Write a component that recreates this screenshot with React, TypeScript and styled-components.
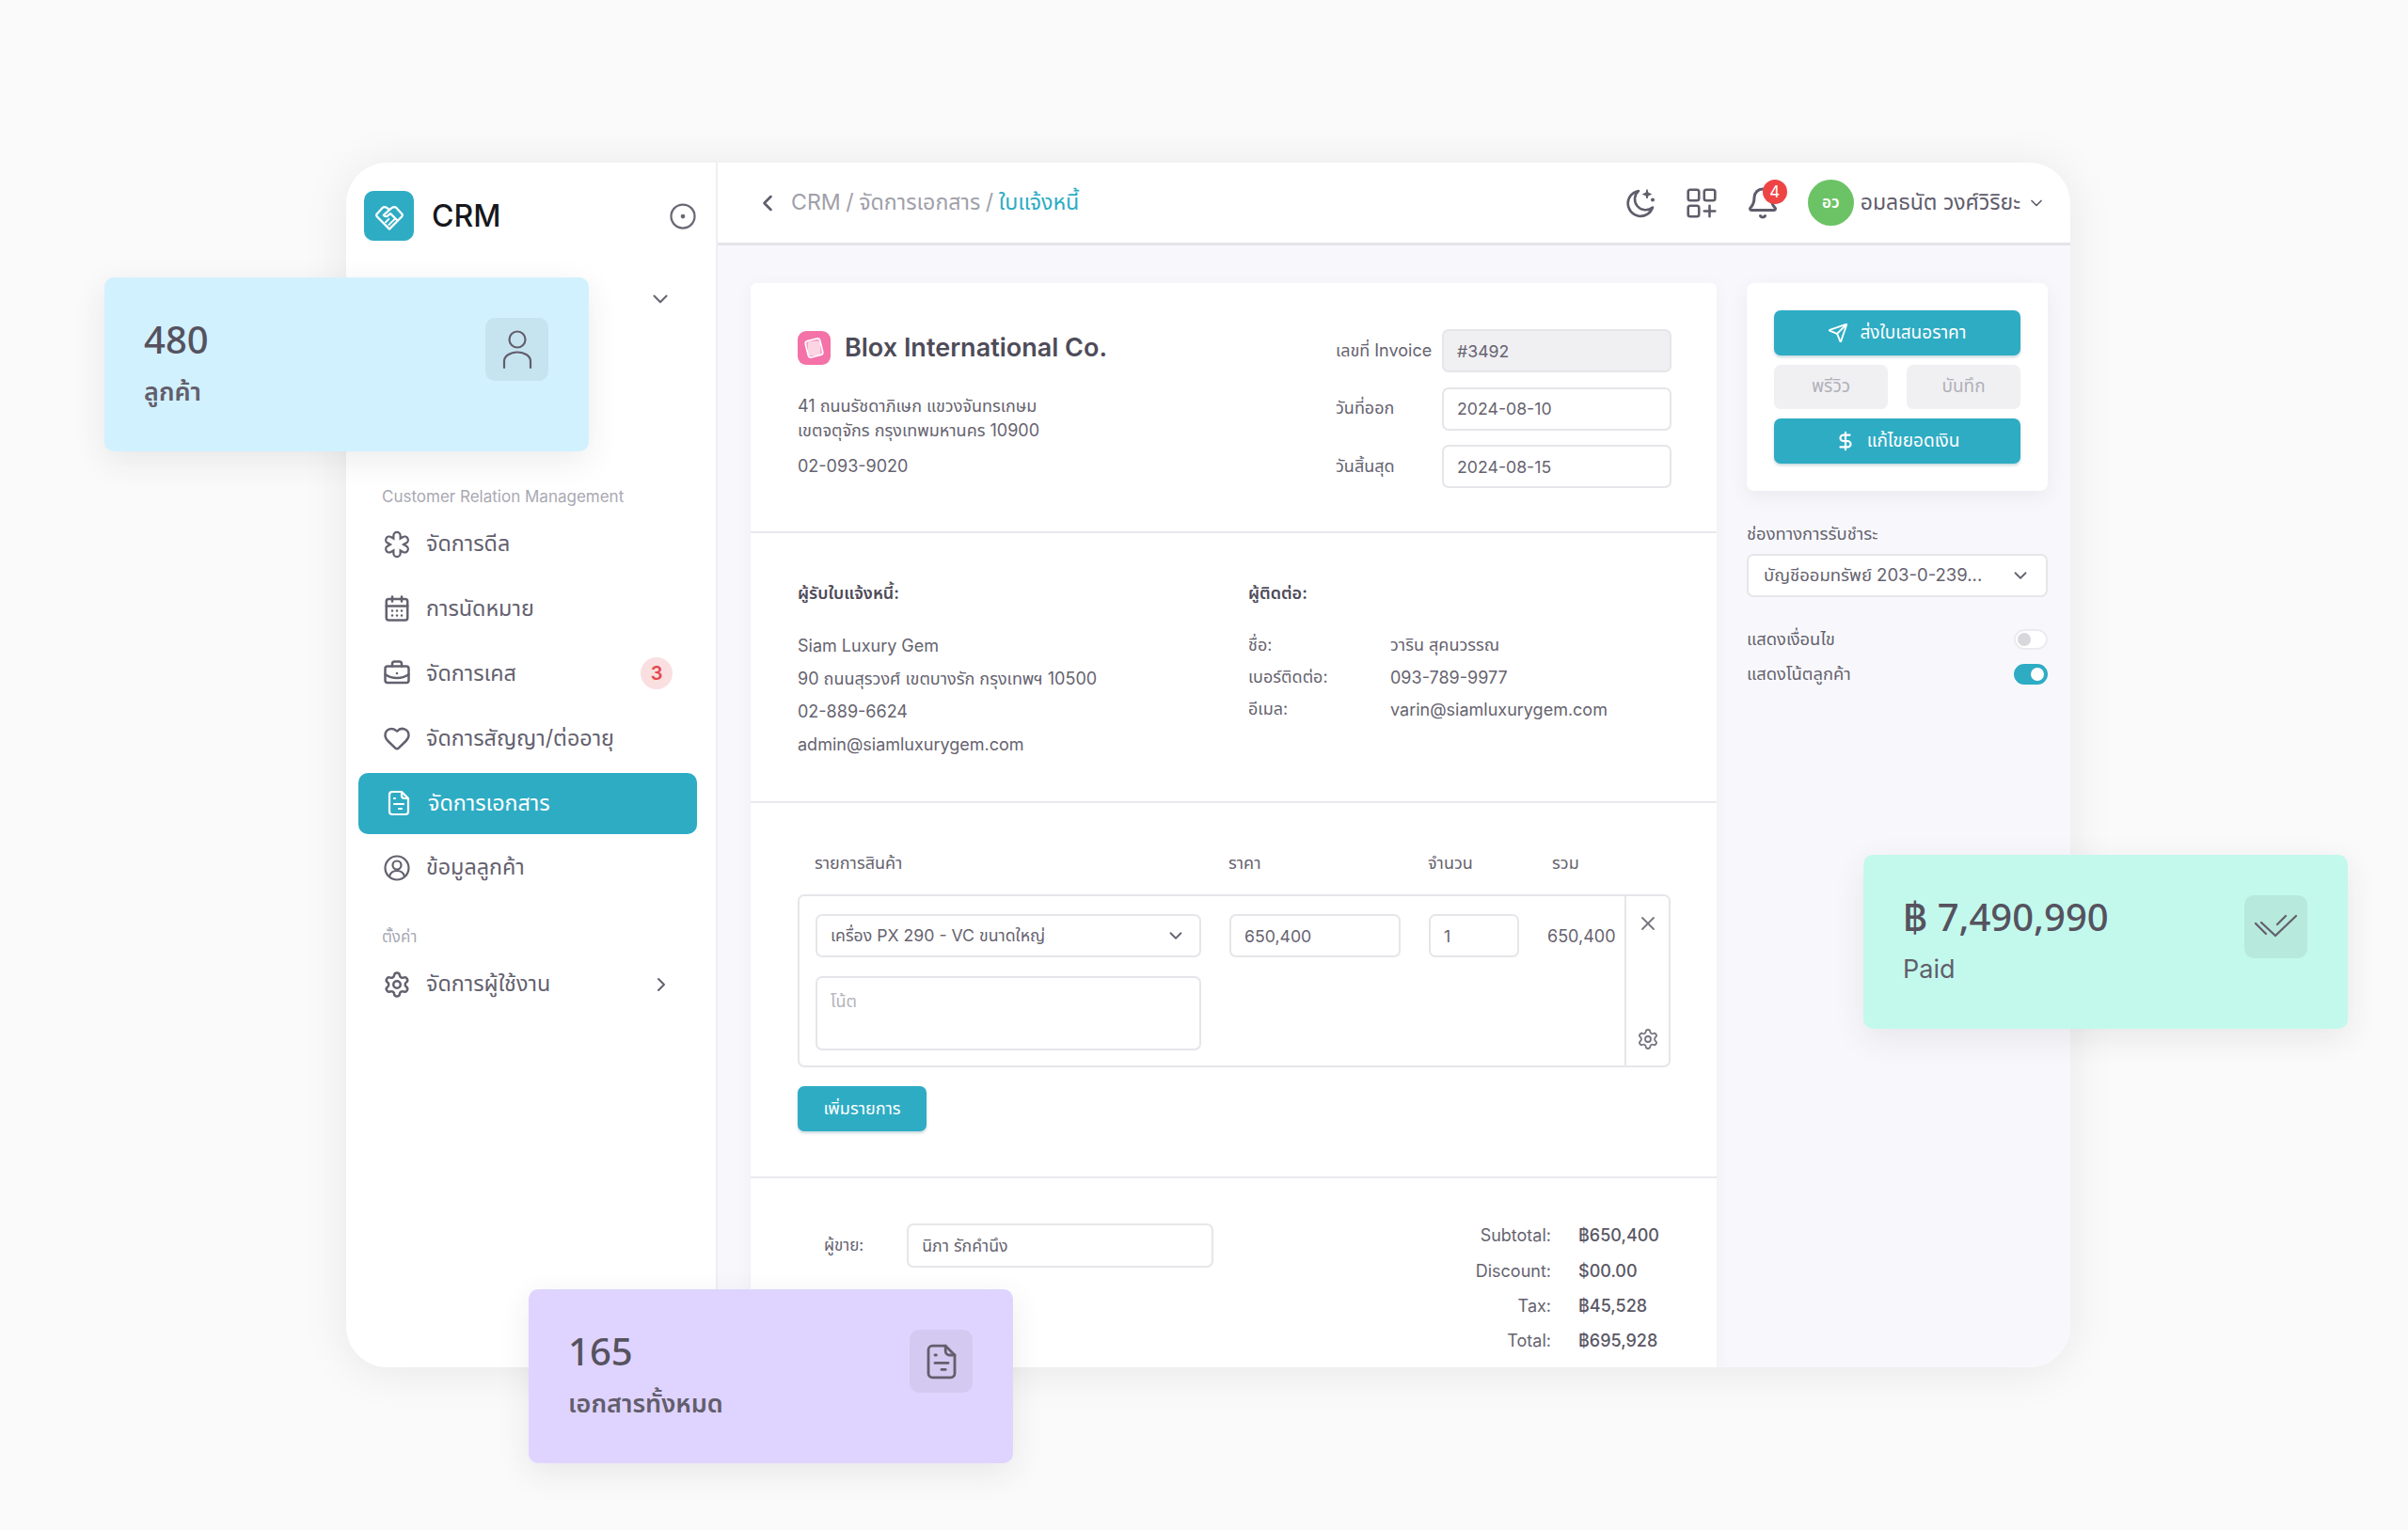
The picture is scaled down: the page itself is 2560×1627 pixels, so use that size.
import React from "react";
import styled, { createGlobalStyle } from "styled-components";
import {
  Bell,
  BriefcaseBusiness,
  CalendarDays,
  ChevronDown,
  ChevronLeft,
  ChevronRight,
  CircleDot,
  DollarSign,
  Heart,
  Send,
  Settings,
  X,
} from "lucide-react";

const GlobalStyle = createGlobalStyle`
  html, body { margin: 0; padding: 0; background: #fafafa; }
  * { box-sizing: border-box; }
  body { font-family: Inter, "Noto Sans", "Noto Sans Thai", "DejaVu Sans", sans-serif; color: #5f5c6b; }
`;

const teal = "#2eacc4";

const Stage = styled.div`
  position: relative;
  width: 2560px;
  height: 1627px;
  padding: 173px 0 0 368px;
  overflow: hidden;
`;

const Window = styled.div`
  display: grid;
  grid-template-columns: 395px 1fr;
  width: 1833px;
  height: 1281px;
  background: #fff;
  border-radius: 44px;
  overflow: hidden;
  box-shadow: 0 4px 50px rgba(0, 0, 0, 0.08);
`;

const Sidebar = styled.aside`
  padding: 30px 20px 0 13px;
  background: #fff;
  border-right: 2px solid #efeff3;
`;

const Brand = styled.div`
  display: flex;
  align-items: center;
  height: 53px;
  padding: 0 0 0 6px;
  color: #6b6875;
`;

const LogoBox = styled.div`
  display: flex;
  align-items: center;
  justify-content: center;
  width: 53px;
  height: 53px;
  border-radius: 10px;
  background: ${teal};
  margin-right: 19px;
`;

const BrandName = styled.div`
  flex: 1;
  font-size: 32px;
  font-weight: 500;
  color: #17171c;
`;

const Switcher = styled.div`
  display: flex;
  justify-content: flex-end;
  align-items: center;
  height: 44px;
  margin-top: 40px;
  padding-right: 26px;
  color: #6b6875;
`;

const GroupLabel = styled.div<{ $top: number }>`
  height: 20px;
  line-height: 20px;
  margin-top: ${(p) => p.$top}px;
  padding-left: 25px;
  font-size: 17px;
  color: #a9a9b3;
`;

const NavList = styled.nav`
  display: flex;
  flex-direction: column;
  gap: 3.9px;
  margin-top: 8px;
`;

const NavItem = styled.div<{ $active?: boolean }>`
  display: flex;
  align-items: center;
  gap: 16px;
  height: 65px;
  padding: 0 ${(p) => (p.$active ? 28 : 26)}px;
  border-radius: 10px;
  font-size: 23.3px;
  background: ${(p) => (p.$active ? teal : "transparent")};
  color: ${(p) => (p.$active ? "#fff" : "#64616f")};
`;

const NavText = styled.span`
  flex: 1;
`;

const CountBadge = styled.span`
  display: flex;
  align-items: center;
  justify-content: center;
  width: 34px;
  height: 34px;
  border-radius: 50%;
  background: #fadfe0;
  color: #e5484d;
  font-size: 20px;
  font-weight: 600;
`;

const Content = styled.div`
  display: flex;
  flex-direction: column;
  min-width: 0;
  background: #f8f8fc;
`;

const Topbar = styled.header`
  display: flex;
  align-items: center;
  flex: none;
  height: 88px;
  padding: 0 26px 0 39px;
  background: #fff;
  border-bottom: 3px solid #e4e4e9;
  color: #5f5c6b;
`;

const Crumbs = styled.div`
  flex: 1;
  margin-left: 11px;
  font-size: 23.2px;
  word-spacing: -1px;
  color: #a0a0aa;
`;

const CrumbActive = styled.span`
  color: ${teal};
`;

const TopIcons = styled.div`
  display: flex;
  align-items: center;
  gap: 29px;
`;

const BellWrap = styled.div`
  position: relative;
  height: 36px;
  margin-right: 1px;
`;

const BellBadge = styled.span`
  position: absolute;
  top: -7px;
  right: -8px;
  display: flex;
  align-items: center;
  justify-content: center;
  width: 26px;
  height: 26px;
  border-radius: 50%;
  background: #ee4444;
  color: #fff;
  font-size: 17px;
`;

const UserBox = styled.div`
  display: flex;
  align-items: center;
  gap: 7px;
  font-size: 23px;
`;

const Avatar = styled.div`
  display: flex;
  align-items: center;
  justify-content: center;
  width: 49px;
  height: 49px;
  border-radius: 50%;
  background: #6cc365;
  color: #fff;
  font-size: 17px;
  font-weight: 600;
`;

const Main = styled.main`
  flex: 1;
  display: grid;
  grid-template-columns: 1027px 320px;
  gap: 32px;
  padding: 40px 0 0 35px;
  overflow: hidden;
`;

const InvoiceCard = styled.section`
  height: 1200px;
  background: #fff;
  box-shadow: 0 2px 16px rgba(40, 40, 70, 0.05);
  border-radius: 6px 6px 0 0;
`;

const Section = styled.div`
  border-bottom: 2px solid #e9e9ee;
`;

const HeadSection = styled(Section)`
  display: flex;
  justify-content: space-between;
  height: 266px;
  padding: 49px 48px 0 50px;
`;

const Company = styled.div`
  font-size: 18px;
  color: #66636f;
`;

const CompanyTitle = styled.div`
  display: flex;
  align-items: center;
  gap: 15px;
  height: 37px;
  margin: 1px 0 31px;
  font-size: 27px;
  font-weight: 600;
  color: #4e4b59;
`;

const AddressLine = styled.div<{ $gap?: number }>`
  line-height: 26px;
  margin-top: ${(p) => p.$gap ?? 0}px;
`;

const DateForm = styled.div`
  display: grid;
  grid-template-columns: 113px 244px;
  grid-auto-rows: 46px;
  row-gap: 15.5px;
  align-items: center;
  font-size: 18px;
  color: #66636f;
`;

const Field = styled.div<{ $disabled?: boolean; $w?: number }>`
  display: flex;
  align-items: center;
  justify-content: space-between;
  width: ${(p) => (p.$w ? `${p.$w}px` : "100%")};
  height: 46px;
  padding: 0 14px;
  border: 2px solid #e6e6ea;
  border-radius: 7px;
  background: ${(p) => (p.$disabled ? "#f0f0f3" : "#fff")};
  font-size: 17.7px;
  color: #66636f;
`;

const PartySection = styled(Section)`
  display: grid;
  grid-template-columns: 479px 1fr;
  height: 287px;
  padding: 52px 0 0 50px;
  font-size: 18px;
  color: #66636f;
`;

const PartyTitle = styled.div`
  height: 24px;
  line-height: 24px;
  margin-bottom: 26px;
  font-weight: 600;
  color: #4e4b59;
`;

const PartyLine = styled.div`
  line-height: 35px;
`;

const ContactGrid = styled.div`
  display: grid;
  grid-template-columns: 151px 1fr;
  grid-auto-rows: 34px;
  align-items: center;
`;

const ItemsSection = styled(Section)`
  height: 399px;
  padding: 52px 49px 0 50px;
`;

const ItemHead = styled.div`
  display: grid;
  grid-template-columns: 410px 182px 96px 1fr;
  column-gap: 30px;
  height: 24px;
  line-height: 24px;
  padding-left: 18px;
  margin-bottom: 21px;
  font-size: 18px;
  color: #66636f;
`;

const HeadTotal = styled.span`
  padding-left: 6px;
`;

const ItemBox = styled.div`
  display: grid;
  grid-template-columns: 1fr 47px;
  height: 184px;
  border: 2px solid #e6e6ea;
  border-radius: 7px;
`;

const ItemBody = styled.div`
  padding: 19px 0 0 17px;
`;

const ItemRow = styled.div`
  display: grid;
  grid-template-columns: 410px 182px 96px 1fr;
  column-gap: 30px;
  align-items: center;
  font-size: 18px;
  color: #66636f;
`;

const ItemTotal = styled.span`
  white-space: nowrap;
`;

const NoteBox = styled.div`
  width: 410px;
  height: 79px;
  margin-top: 20px;
  padding: 12px 14px;
  border: 2px solid #e6e6ea;
  border-radius: 7px;
  font-size: 18px;
  color: #b4b4bc;
`;

const ItemActions = styled.div`
  display: flex;
  flex-direction: column;
  align-items: center;
  justify-content: space-between;
  padding: 17px 0 16px;
  border-left: 2px solid #e6e6ea;
  color: #77747f;
`;

const AddButton = styled.button`
  display: block;
  width: 137px;
  height: 48px;
  margin-top: 20px;
  border: 0;
  border-radius: 7px;
  background: ${teal};
  color: #fff;
  font: inherit;
  font-size: 18px;
  box-shadow: 0 2px 3px rgba(30, 100, 120, 0.25);
`;

const FooterSection = styled.div`
  display: flex;
  justify-content: space-between;
  padding: 42px 0 0 78px;
`;

const Seller = styled.div`
  display: flex;
  align-items: center;
  gap: 46px;
  height: 47px;
  margin-top: 6px;
  font-size: 17px;
  color: #66636f;
`;

const SellerField = styled(Field)`
  height: 47px;
  padding-top: 2px;
`;

const Totals = styled.div`
  display: grid;
  grid-template-columns: auto 147px;
  grid-auto-rows: 37.4px;
  column-gap: 29px;
  align-items: center;
  font-size: 18px;
  color: #66636f;
`;

const TotalLabel = styled.span`
  text-align: right;
`;

const TotalValue = styled.span`
  font-weight: 500;
  color: #5a5765;
`;

const Panel = styled.aside`
  font-size: 18.4px;
  color: #66636f;
`;

const ActionCard = styled.div`
  display: flex;
  flex-direction: column;
  gap: 10px;
  height: 221px;
  padding: 29px;
  background: #fff;
  border-radius: 8px;
  box-shadow: 0 6px 20px rgba(40, 40, 70, 0.07);
`;

const ActionButton = styled.button<{ $ghost?: boolean }>`
  display: flex;
  flex: 1;
  align-items: center;
  justify-content: center;
  gap: 12px;
  height: 47px;
  border: 0;
  border-radius: 7px;
  font: inherit;
  font-size: 19px;
  background: ${(p) => (p.$ghost ? "#f0f0f3" : teal)};
  color: ${(p) => (p.$ghost ? "#b0b0b8" : "#fff")};
  box-shadow: ${(p) => (p.$ghost ? "none" : "0 2px 3px rgba(30, 100, 120, 0.25)")};
`;

const ButtonRow = styled.div`
  display: flex;
  gap: 20px;
`;

const PanelLabel = styled.div`
  height: 24px;
  line-height: 24px;
  margin: 33px 0 10px;
`;

const PanelSelect = styled(Field)`
  padding: 0 16px;
  font-size: 18.5px;
`;

const ToggleRows = styled.div`
  display: flex;
  flex-direction: column;
  gap: 15px;
  margin-top: 34px;
`;

const ToggleRow = styled.div`
  display: flex;
  align-items: center;
  justify-content: space-between;
  height: 22px;
`;

const Toggle = styled.span<{ $on?: boolean }>`
  position: relative;
  display: block;
  width: 36px;
  height: 22px;
  border-radius: 11px;
  border: 2px solid ${(p) => (p.$on ? teal : "#ececf0")};
  background: ${(p) => (p.$on ? teal : "#fff")};

  &::after {
    content: "";
    position: absolute;
    top: 2px;
    left: ${(p) => (p.$on ? "16px" : "2px")};
    width: 14px;
    height: 14px;
    border-radius: 50%;
    background: ${(p) => (p.$on ? "#fff" : "#d8d8dc")};
  }
`;

const StatCard = styled.div<{ $x: number; $y: number; $bg: string }>`
  position: absolute;
  left: ${(p) => p.$x}px;
  top: ${(p) => p.$y}px;
  display: flex;
  justify-content: space-between;
  width: 515px;
  height: 185px;
  padding: 43px 43px 43px 42px;
  border-radius: 10px;
  background: ${(p) => p.$bg};
  box-shadow: 0 10px 34px rgba(40, 40, 60, 0.09);
`;

const StatText = styled.div`
  padding-top: 3px;
`;

const StatValue = styled.div`
  height: 40px;
  line-height: 40px;
  font-family: "Noto Sans", Inter, sans-serif;
  font-size: 40px;
  font-weight: 500;
  color: #56525f;
`;

const StatLabel = styled.div<{ $weight?: number }>`
  margin-top: 19px;
  height: 34px;
  line-height: 34px;
  font-size: 27px;
  font-weight: ${(p) => p.$weight ?? 600};
  color: #625e6c;
`;

const StatTile = styled.div<{ $bg: string }>`
  display: flex;
  align-items: center;
  justify-content: center;
  width: 67px;
  height: 67px;
  border-radius: 10px;
  background: ${(p) => p.$bg};
  color: #625e6c;
`;

const HandshakeMark = () => (
  <svg width="34" height="34" viewBox="0 0 30 30" fill="none" stroke="#fff" strokeWidth="2" strokeLinejoin="round" strokeLinecap="round">
    <path d="M15 27 3.5 15.5Q2 14 3.5 12.5L8.5 7Q10.5 5.5 12.5 7L15 9l2.5-2Q19.5 5.5 21.5 7l5 5.5Q28 14 26.5 15.5Z" />
    <path d="M15 9l-5.5 5q1.5 2 4 .5l2.5-2 6.5 6.5" />
    <path d="M11.5 20.5l3-3M14.5 23l3-3M18 19.5l2-2" strokeWidth="1.7" />
  </svg>
);

const DealIcon = () => (
  <svg width="30" height="30" viewBox="0 0 30 30" fill="none" strokeLinecap="round">
    <g stroke="currentColor" strokeWidth="9.5">
      <path d="M15 5.5v19M6.8 10.2l16.4 9.6M23.2 10.2 6.8 19.8" />
    </g>
    <g stroke="#fff" strokeWidth="5">
      <path d="M15 5.5v19M6.8 10.2l16.4 9.6M23.2 10.2 6.8 19.8" />
    </g>
  </svg>
);

const DocIcon = ({ size = 30, weight = 2.2 }: { size?: number; weight?: number }) => (
  <svg width={size} height={size} viewBox="0 0 30 30" fill="none" stroke="currentColor" strokeWidth={weight} strokeLinecap="round" strokeLinejoin="round">
    <path d="M8 3h10l7 7v14a3 3 0 0 1-3 3H8a3 3 0 0 1-3-3V6a3 3 0 0 1 3-3Z" />
    <path d="M18 3v4a3 3 0 0 0 3 3h4M10 10h1M10 16h10M15 21h3" />
  </svg>
);

const CustomerIcon = () => (
  <svg width="30" height="30" viewBox="0 0 30 30" fill="none" stroke="currentColor" strokeWidth="2.2">
    <circle cx="15" cy="15" r="12.5" />
    <circle cx="15" cy="12" r="4.5" />
    <path d="M7 24c1-4 4-6 8-6s7 2 8 6" />
  </svg>
);

const PersonIcon = () => (
  <svg width="32" height="42" viewBox="0 0 32 42" fill="none" stroke="currentColor" strokeWidth="2.2" strokeLinecap="round">
    <circle cx="16" cy="10" r="8.5" />
    <path d="M2 40v-7a14 9.5 0 0 1 28 0v7" />
  </svg>
);

const DoubleCheck = () => (
  <svg width="46" height="30" viewBox="0 0 46 30" fill="none" stroke="currentColor" strokeWidth="2.2" strokeLinecap="round">
    <path d="M1 11l11 11M7 10l15 14L44 3M24 12l9-9" />
  </svg>
);

const MoonStarsIcon = () => (
  <svg width="36" height="36" viewBox="0 0 36 36" fill="none" stroke="currentColor" strokeWidth="2.6" strokeLinecap="round" strokeLinejoin="round">
    <path d="M16 5A13.5 13.5 0 1 0 31 22.5 11.5 11.5 0 0 1 16 5Z" />
    <path d="M25 4l1.2 3.3L29.5 8.5l-3.3 1.2L25 13l-1.2-3.3-3.3-1.2 3.3-1.2L25 4Z" fill="currentColor" strokeWidth="1" />
    <path d="M31 14.5v.1" strokeWidth="4" />
  </svg>
);

const AppsIcon = () => (
  <svg width="36" height="36" viewBox="0 0 39 39" fill="none" stroke="currentColor" strokeWidth="2.8" strokeLinecap="round">
    <rect x="4" y="4" width="12.5" height="12.5" rx="2.5" />
    <rect x="22.5" y="4" width="12.5" height="12.5" rx="2.5" />
    <rect x="4" y="22.5" width="12.5" height="12.5" rx="2.5" />
    <path d="M28.7 22.5v12.5M22.5 28.7h12.5" />
  </svg>
);

const BloxMark = () => (
  <svg width="35" height="36" viewBox="0 0 35 36">
    <rect width="35" height="36" rx="9" fill="#f472a8" />
    <rect x="9.5" y="9" width="16" height="18" rx="3" fill="#fff" fillOpacity="0.35" stroke="#fff" strokeWidth="1.6" transform="rotate(-14 17.5 18)" />
    <rect x="11" y="11" width="13" height="15" rx="2" fill="#fff" fillOpacity="0.55" />
  </svg>
);

export default function App() {
  return (
    <Stage>
      <GlobalStyle />
      <Window>
        <Sidebar>
          <Brand>
            <LogoBox>
              <HandshakeMark />
            </LogoBox>
            <BrandName>CRM</BrandName>
            <CircleDot size={30} strokeWidth={1.8} />
          </Brand>
          <Switcher>
            <ChevronDown size={26} strokeWidth={2} />
          </Switcher>
          <GroupLabel $top={178}>Customer Relation Management</GroupLabel>
          <NavList>
            <NavItem>
              <DealIcon />
              <NavText>จัดการดีล</NavText>
            </NavItem>
            <NavItem>
              <CalendarDays size={30} strokeWidth={2} />
              <NavText>การนัดหมาย</NavText>
            </NavItem>
            <NavItem>
              <BriefcaseBusiness size={30} strokeWidth={2} />
              <NavText>จัดการเคส</NavText>
              <CountBadge>3</CountBadge>
            </NavItem>
            <NavItem>
              <Heart size={30} strokeWidth={2} />
              <NavText>จัดการสัญญา/ต่ออายุ</NavText>
            </NavItem>
            <NavItem $active>
              <DocIcon />
              <NavText>จัดการเอกสาร</NavText>
            </NavItem>
            <NavItem>
              <CustomerIcon />
              <NavText>ข้อมูลลูกค้า</NavText>
            </NavItem>
          </NavList>
          <GroupLabel $top={31}>ตั้งค่า</GroupLabel>
          <NavList>
            <NavItem>
              <Settings size={30} strokeWidth={2} />
              <NavText>จัดการผู้ใช้งาน</NavText>
              <ChevronRight size={24} strokeWidth={2} />
            </NavItem>
          </NavList>
        </Sidebar>
        <Content>
          <Topbar>
            <ChevronLeft size={28} strokeWidth={2.2} />
            <Crumbs>
              CRM / จัดการเอกสาร / <CrumbActive>ใบแจ้งหนี้</CrumbActive>
            </Crumbs>
            <TopIcons>
              <MoonStarsIcon />
              <AppsIcon />
              <BellWrap>
                <Bell size={36} strokeWidth={2} />
                <BellBadge>4</BellBadge>
              </BellWrap>
              <UserBox>
                <Avatar>อว</Avatar>
                อมลธนัต วงศ์วิริยะ
                <ChevronDown size={20} strokeWidth={2} />
              </UserBox>
            </TopIcons>
          </Topbar>
          <Main>
            <InvoiceCard>
              <HeadSection>
                <Company>
                  <CompanyTitle>
                    <BloxMark />
                    Blox International Co.
                  </CompanyTitle>
                  <AddressLine>41 ถนนรัชดาภิเษก แขวงจันทรเกษม</AddressLine>
                  <AddressLine>เขตจตุจักร กรุงเทพมหานคร 10900</AddressLine>
                  <AddressLine $gap={12}>02-093-9020</AddressLine>
                </Company>
                <DateForm>
                  <span>เลขที่ Invoice</span>
                  <Field $disabled>#3492</Field>
                  <span>วันที่ออก</span>
                  <Field>2024-08-10</Field>
                  <span>วันสิ้นสุด</span>
                  <Field>2024-08-15</Field>
                </DateForm>
              </HeadSection>
              <PartySection>
                <div>
                  <PartyTitle>ผู้รับใบแจ้งหนี้:</PartyTitle>
                  <PartyLine>Siam Luxury Gem</PartyLine>
                  <PartyLine>90 ถนนสุรวงศ์ เขตบางรัก กรุงเทพฯ 10500</PartyLine>
                  <PartyLine>02-889-6624</PartyLine>
                  <PartyLine>admin@siamluxurygem.com</PartyLine>
                </div>
                <div>
                  <PartyTitle>ผู้ติดต่อ:</PartyTitle>
                  <ContactGrid>
                    <span>ชื่อ:</span>
                    <span>วาริน สุคนวรรณ</span>
                    <span>เบอร์ติดต่อ:</span>
                    <span>093-789-9977</span>
                    <span>อีเมล:</span>
                    <span>varin@siamluxurygem.com</span>
                  </ContactGrid>
                </div>
              </PartySection>
              <ItemsSection>
                <ItemHead>
                  <span>รายการสินค้า</span>
                  <span>ราคา</span>
                  <span>จำนวน</span>
                  <HeadTotal>รวม</HeadTotal>
                </ItemHead>
                <ItemBox>
                  <ItemBody>
                    <ItemRow>
                      <Field>
                        เครื่อง PX 290 - VC ขนาดใหญ่
                        <ChevronDown size={22} strokeWidth={2} />
                      </Field>
                      <Field>650,400</Field>
                      <Field>1</Field>
                      <ItemTotal>650,400</ItemTotal>
                    </ItemRow>
                    <NoteBox>โน้ต</NoteBox>
                  </ItemBody>
                  <ItemActions>
                    <X size={24} strokeWidth={1.8} />
                    <Settings size={24} strokeWidth={1.8} />
                  </ItemActions>
                </ItemBox>
                <AddButton>เพิ่มรายการ</AddButton>
              </ItemsSection>
              <FooterSection>
                <Seller>
                  ผู้ขาย:
                  <SellerField $w={326}>นิภา รักคำนึง</SellerField>
                </Seller>
                <Totals>
                  <TotalLabel>Subtotal:</TotalLabel>
                  <TotalValue>฿650,400</TotalValue>
                  <TotalLabel>Discount:</TotalLabel>
                  <TotalValue>$00.00</TotalValue>
                  <TotalLabel>Tax:</TotalLabel>
                  <TotalValue>฿45,528</TotalValue>
                  <TotalLabel>Total:</TotalLabel>
                  <TotalValue>฿695,928</TotalValue>
                </Totals>
              </FooterSection>
            </InvoiceCard>
            <Panel>
              <ActionCard>
                <ActionButton>
                  <Send size={22} strokeWidth={2} />
                  ส่งใบเสนอราคา
                </ActionButton>
                <ButtonRow>
                  <ActionButton $ghost>พรีวิว</ActionButton>
                  <ActionButton $ghost>บันทึก</ActionButton>
                </ButtonRow>
                <ActionButton>
                  <DollarSign size={22} strokeWidth={2.4} />
                  แก้ไขยอดเงิน
                </ActionButton>
              </ActionCard>
              <PanelLabel>ช่องทางการรับชำระ</PanelLabel>
              <PanelSelect>
                บัญชีออมทรัพย์ 203-0-239...
                <ChevronDown size={22} strokeWidth={2} />
              </PanelSelect>
              <ToggleRows>
                <ToggleRow>
                  แสดงเงื่อนไข
                  <Toggle />
                </ToggleRow>
                <ToggleRow>
                  แสดงโน้ตลูกค้า
                  <Toggle $on />
                </ToggleRow>
              </ToggleRows>
            </Panel>
          </Main>
        </Content>
      </Window>
      <StatCard $x={111} $y={295} $bg="#d2f1fe">
        <StatText>
          <StatValue>480</StatValue>
          <StatLabel>ลูกค้า</StatLabel>
        </StatText>
        <StatTile $bg="#c6e4f0">
          <PersonIcon />
        </StatTile>
      </StatCard>
      <StatCard $x={1981} $y={909} $bg="#c3f9ec">
        <StatText>
          <StatValue>฿ 7,490,990</StatValue>
          <StatLabel $weight={400}>Paid</StatLabel>
        </StatText>
        <StatTile $bg="#b7e9dd">
          <DoubleCheck />
        </StatTile>
      </StatCard>
      <StatCard $x={562} $y={1371} $bg="#dfd4ff">
        <StatText>
          <StatValue>165</StatValue>
          <StatLabel>เอกสารทั้งหมด</StatLabel>
        </StatText>
        <StatTile $bg="#d4caf1">
          <DocIcon size={42} weight={2} />
        </StatTile>
      </StatCard>
    </Stage>
  );
}
